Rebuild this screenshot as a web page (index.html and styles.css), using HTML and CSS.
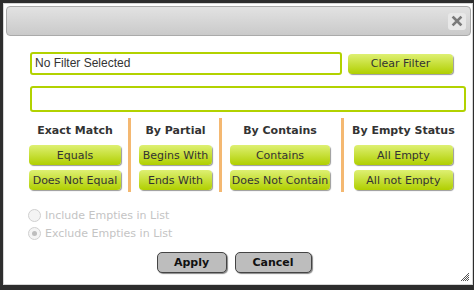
FILE: index.html
```html
<!DOCTYPE html>
<html lang="en">
<head>
  <meta charset="UTF-8">
  <title>Filter</title>
  <link rel="stylesheet" href="styles.css">
</head>
<body>

  <div class="dialog">
    <div class="titlebar">
      <div class="close-btn">
        <svg width="18" height="17" viewBox="0 0 18 17">
          <path d="M5.5 4.5 L12.5 11.5 M12.5 4.5 L5.5 11.5" stroke="#7a7a7a" stroke-width="2.6" stroke-linecap="square"/>
        </svg>
      </div>
    </div>

    <div class="content">
      <div class="row-top">
        <div class="filter-box">No Filter Selected</div>
        <button class="green-btn clear-btn">Clear Filter</button>
      </div>

      <div class="value-box"></div>

      <div class="groups">
        <div class="group">
          <div class="group-title">Exact Match</div>
          <button class="green-btn w-exact">Equals</button>
          <button class="green-btn w-exact">Does Not Equal</button>
        </div>
        <div class="group">
          <div class="group-title">By Partial</div>
          <button class="green-btn w-partial">Begins With</button>
          <button class="green-btn w-partial">Ends With</button>
        </div>
        <div class="group group-wide">
          <div class="group-title">By Contains</div>
          <button class="green-btn w-contains">Contains</button>
          <button class="green-btn w-contains">Does Not Contain</button>
        </div>
        <div class="group group-last">
          <div class="group-title">By Empty Status</div>
          <button class="green-btn w-empty">All Empty</button>
          <button class="green-btn w-empty">All not Empty</button>
        </div>
      </div>

      <div class="empties">
        <label class="radio-row"><span class="radio"></span>Include Empties in List</label>
        <label class="radio-row"><span class="radio checked"></span>Exclude Empties in List</label>
      </div>

      <div class="actions">
        <button class="grey-btn apply">Apply</button>
        <button class="grey-btn cancel">Cancel</button>
      </div>
    </div>

    <svg class="grip" width="8" height="8" viewBox="0 0 8 8">
      <path d="M8 0 L0 8 M8 2 L2 8 M8 4 L4 8 M8 6 L6 8" stroke="#555" stroke-width="1"/>
    </svg>
  </div>

</body>
</html>
```

FILE: styles.css
```css
* { margin: 0; padding: 0; box-sizing: border-box; }
html, body {
  width: 100%;
  height: 100%;
  background-color: #2d2d2d;
  overflow: hidden;
}
body {
  padding: 3px 0 0 3px;
  font-family: 'DejaVu Sans', Verdana, sans-serif;
}
.dialog {
  position: relative;
  width: 470px;
  height: 282px;
  background: #fff;
  border: 1px solid #d6d6d6;
}
.titlebar {
  height: 30px;
  margin: 2px 1px 0 2px;
  border: 1px solid #aaa;
  border-radius: 4px;
  background: linear-gradient(#e2e2e2, #cacaca);
  display: flex;
  align-items: center;
  justify-content: flex-end;
  padding-right: 4px;
}
.close-btn {
  width: 18px;
  height: 17px;
  border-radius: 3px;
  background: #e8e8e8;
}
.close-btn svg {
  display: block;
}
.content {
  padding: 16px 0 0 26px;
}
.row-top {
  display: flex;
  align-items: center;
  gap: 6px;
}
.filter-box {
  width: 312px;
  height: 23px;
  border: 2px solid #b2d200;
  border-radius: 3px;
  padding-left: 3px;
  font-family: 'Liberation Sans', Arial, sans-serif;
  font-size: 12px;
  line-height: 19px;
  color: #333;
}
.green-btn {
  height: 20px;
  border: none;
  border-radius: 4px;
  background: linear-gradient(#def073, #b0cf00);
  box-shadow: 1px 1px 1px #999;
  font-family: 'DejaVu Sans', Verdana, sans-serif;
  font-size: 11px;
  color: #333;
  white-space: nowrap;
}
.clear-btn {
  width: 105px;
}
.value-box {
  width: 436px;
  height: 26px;
  margin-top: 11px;
  border: 2px solid #b2d200;
  border-radius: 3px;
}
.groups {
  display: flex;
  margin: 6px 0 0 -1px;
}
.group {
  display: flex;
  flex-direction: column;
  align-items: center;
  gap: 5px;
  padding: 4px 7px 2px 8px;
  border-right: 3px solid #f4b871;
}
.group:first-child {
  padding-left: 0;
}
.group-wide {
  padding-right: 11px;
}
.group-last {
  border-right: none;
}
.group-title {
  height: 18px;
  line-height: 18px;
  font-size: 11px;
  font-weight: bold;
  color: #333;
  white-space: nowrap;
}
.w-exact { width: 92px; }
.w-partial { width: 73px; }
.w-contains { width: 100px; }
.w-empty { width: 99px; }
.empties {
  margin-top: 14px;
  display: flex;
  flex-direction: column;
}
.radio-row {
  display: flex;
  align-items: center;
  height: 18px;
  font-size: 11px;
  color: #c4c4c4;
}
.radio {
  width: 13px;
  height: 13px;
  border: 1px solid #d0d0d0;
  border-radius: 50%;
  background: #f4f4f4;
  margin: 0 4px 0 -2px;
  position: relative;
}
.radio.checked::after {
  content: "";
  position: absolute;
  left: 3px;
  top: 3px;
  width: 5px;
  height: 5px;
  border-radius: 50%;
  background: #bdbdbd;
}
.actions {
  display: flex;
  justify-content: center;
  gap: 8px;
  margin-top: 10px;
  padding-right: 34px;
}
.grey-btn {
  height: 21px;
  border: 1px solid #444;
  border-radius: 5px;
  background: #bdbdbd;
  box-shadow: 1px 1px 1px #888;
  font-family: 'DejaVu Sans', Verdana, sans-serif;
  font-size: 11px;
  font-weight: bold;
  color: #111;
}
.apply { width: 70px; }
.cancel { width: 77px; }
.grip {
  position: absolute;
  right: 3px;
  bottom: 3px;
}
```
